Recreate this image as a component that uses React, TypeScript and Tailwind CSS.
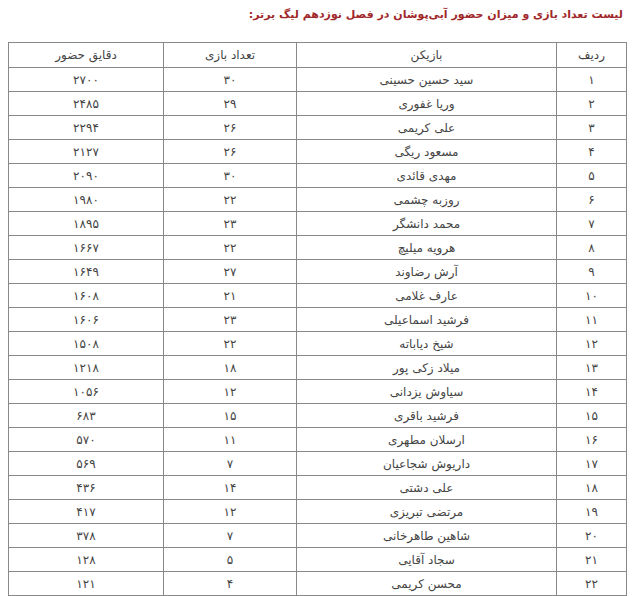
import React from "react";

const rows: [string, string, string, string][] = [
  ["۱", "سید حسین حسینی", "۳۰", "۲۷۰۰"],
  ["۲", "وریا غفوری", "۲۹", "۲۴۸۵"],
  ["۳", "علی کریمی", "۲۶", "۲۲۹۴"],
  ["۴", "مسعود ریگی", "۲۶", "۲۱۲۷"],
  ["۵", "مهدی قائدی", "۳۰", "۲۰۹۰"],
  ["۶", "روزبه چشمی", "۲۲", "۱۹۸۰"],
  ["۷", "محمد دانشگر", "۲۳", "۱۸۹۵"],
  ["۸", "هرویه میلیچ", "۲۲", "۱۶۶۷"],
  ["۹", "آرش رضاوند", "۲۷", "۱۶۴۹"],
  ["۱۰", "عارف غلامی", "۲۱", "۱۶۰۸"],
  ["۱۱", "فرشید اسماعیلی", "۲۳", "۱۶۰۶"],
  ["۱۲", "شیخ دیاباته", "۲۲", "۱۵۰۸"],
  ["۱۳", "میلاد زکی پور", "۱۸", "۱۲۱۸"],
  ["۱۴", "سیاوش یزدانی", "۱۲", "۱۰۵۶"],
  ["۱۵", "فرشید باقری", "۱۵", "۶۸۳"],
  ["۱۶", "ارسلان مطهری", "۱۱", "۵۷۰"],
  ["۱۷", "داریوش شجاعیان", "۷", "۵۶۹"],
  ["۱۸", "علی دشتی", "۱۴", "۴۳۶"],
  ["۱۹", "مرتضی تبریزی", "۱۲", "۴۱۷"],
  ["۲۰", "شاهین طاهرخانی", "۷", "۳۷۸"],
  ["۲۱", "سجاد آقایی", "۵", "۱۲۸"],
  ["۲۲", "محسن کریمی", "۴", "۱۲۱"],
];

export default function App() {
  return (
    <div
      dir="rtl"
      className="w-[633px] h-[596px] bg-white overflow-hidden pl-[8px] pr-[6px] pt-[6px]"
      style={{ fontFamily: '"DejaVu Sans", sans-serif' }}
    >
      <div className="text-[11px] font-bold text-[#a0282a] leading-[18px] pr-[4px]">
        لیست تعداد بازی و میزان حضور آبی‌پوشان در فصل نوزدهم لیگ برتر:
      </div>
      <table className="mt-[18px] w-[619px] border-collapse border border-[#333] text-[12px] text-[#444] table-fixed">
        <colgroup>
          <col className="w-[70px]" />
          <col className="w-[260px]" />
          <col className="w-[133px]" />
          <col />
        </colgroup>
        <thead>
          <tr className="h-[25px]">
            <th className="border border-[#888] font-normal text-center">ردیف</th>
            <th className="border border-[#888] font-normal text-center">بازیکن</th>
            <th className="border border-[#888] font-normal text-center">تعداد بازی</th>
            <th className="border border-[#888] font-normal text-center">دقایق حضور</th>
          </tr>
        </thead>
        <tbody>
          {rows.map((r) => (
            <tr key={r[0]} className="h-[24px]">
              {r.map((c, i) => (
                <td key={i} className="border border-[#888] text-center p-0">
                  {c}
                </td>
              ))}
            </tr>
          ))}
        </tbody>
      </table>
    </div>
  );
}
